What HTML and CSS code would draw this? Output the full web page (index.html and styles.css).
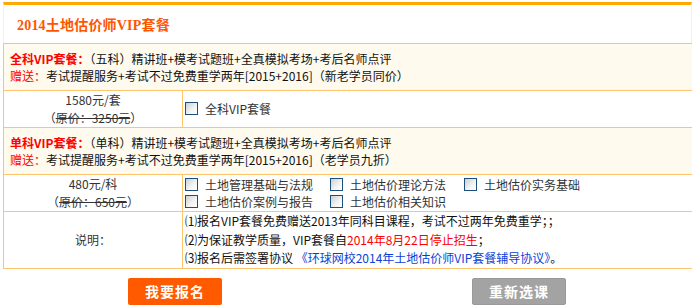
FILE: index.html
```html
<!DOCTYPE html>
<html lang="zh-CN">
<head>
<meta charset="utf-8">
<title>2014土地估价师VIP套餐</title>
<link rel="stylesheet" href="styles.css">
</head>
<body>
<div class="wrap">
  <div class="head"><h1 class="title">2014土地估价师VIP套餐</h1></div>
  <table class="grid">
    <colgroup><col class="c1"><col class="c2"></colgroup>
    <tr class="pkg">
      <td colspan="2">
        <div><b class="red">全科VIP套餐：</b>（五科）精讲班+模考试题班+全真模拟考场+考后名师点评</div>
        <div><span class="red">赠送：</span>考试提醒服务+考试不过免费重学两年[2015+2016]（新老学员同价）</div>
      </td>
    </tr>
    <tr class="opt">
      <td class="price">
        <div>1580元/套</div>
        <div>（<s>原价：3250元</s>）</div>
      </td>
      <td class="choices">
        <label class="ck"><span class="box"></span>全科VIP套餐</label>
      </td>
    </tr>
    <tr class="pkg">
      <td colspan="2">
        <div><b class="red">单科VIP套餐：</b>（单科）精讲班+模考试题班+全真模拟考场+考后名师点评</div>
        <div><span class="red">赠送：</span>考试提醒服务+考试不过免费重学两年[2015+2016]（老学员九折）</div>
      </td>
    </tr>
    <tr class="opt">
      <td class="price">
        <div>480元/科</div>
        <div>（<s>原价：650元</s>）</div>
      </td>
      <td class="choices">
        <div class="cols">
          <label class="ck"><span class="box"></span>土地管理基础与法规</label>
          <label class="ck"><span class="box"></span>土地估价理论方法</label>
          <label class="ck"><span class="box"></span>土地估价实务基础</label>
          <label class="ck"><span class="box"></span>土地估价案例与报告</label>
          <label class="ck"><span class="box"></span>土地估价相关知识</label>
        </div>
      </td>
    </tr>
    <tr class="note">
      <td class="price">说明：</td>
      <td class="notes">
        <div>⑴报名VIP套餐免费赠送2013年同科目课程，考试不过两年免费重学；；</div>
        <div>⑵为保证教学质量，VIP套餐自<span class="red">2014年8月22日停止招生</span>；</div>
        <div>⑶报名后需签署协议 <a class="link" href="#">《环球网校2014年土地估价师VIP套餐辅导协议》</a>。</div>
      </td>
    </tr>
  </table>
  <div class="actions">
    <button class="btn btn-go">我要报名</button>
    <button class="btn btn-reset">重新选课</button>
  </div>
</div>
</body>
</html>
```

FILE: styles.css
```css
* { box-sizing: border-box; }
html, body { background: #fff; }
body {
  margin: 2px 3px 0 3px;
  font-family: "Noto Sans CJK SC", "Liberation Sans", sans-serif;
  font-size: 12px;
  color: #222;
}
.wrap { width: 689px; }
.head {
  border-top: 3px solid #FFA800;
  border-left: 1px solid #FFEFD6;
  border-right: 1px solid #FFEFD6;
  height: 41px;
  display: flex;
  align-items: center;
  padding-left: 13px;
}
.title {
  margin: 0;
  font-family: "Liberation Serif", "Noto Sans CJK SC", serif;
  font-size: 14px;
  font-weight: bold;
  color: #FF5500;
  letter-spacing: 0.2px;
}
.grid {
  width: 689px;
  border-collapse: collapse;
  table-layout: fixed;
}
.c1 { width: 179px; }
.c2 { width: 510px; }
.grid td {
  border: 1px solid #FFC56E;
  padding: 0;
  vertical-align: middle;
}
.pkg td {
  background: #FFFAEE;
  height: 47px;
  padding: 0 6px;
  line-height: 17px;
  color: #111;
}
.red { color: #FF0000; }
b.red { font-weight: bold; }
.opt td { height: 37px; }
.price {
  text-align: center;
  line-height: 18px;
  color: #333;
}
.price s { text-decoration: line-through; }
.choices { padding: 0 2px !important; color: #333; }
.ck {
  display: inline-flex;
  align-items: center;
  gap: 7px;
  height: 17px;
  white-space: nowrap;
}
.box {
  width: 13px;
  height: 13px;
  border: 1px solid #1C4F7C;
  background: linear-gradient(135deg, #cfcfcf 0%, #f4f4f4 60%, #ffffff 100%);
  flex: none;
}
.cols {
  display: grid;
  grid-template-columns: 145px 134px auto;
  row-gap: 0;
}
.note td { height: 55px; }
.notes {
  padding: 0 2px !important;
  line-height: 18.5px;
  color: #111;
}
.link { color: #0B3FD6; text-decoration: none; }
.actions {
  display: flex;
  gap: 250px;
  padding-left: 125px;
  margin-top: 9px;
}
.btn {
  width: 94px;
  height: 27px;
  border: none;
  border-radius: 2px;
  color: #fff;
  font-family: "Noto Sans CJK SC", sans-serif;
  font-size: 14px;
  font-weight: bold;
  letter-spacing: 1px;
  padding: 0;
}
.btn-go { background: #FF5A00; }
.btn-reset { background: #A3A3A3; border: 1px solid #9a9a9a; }
```
